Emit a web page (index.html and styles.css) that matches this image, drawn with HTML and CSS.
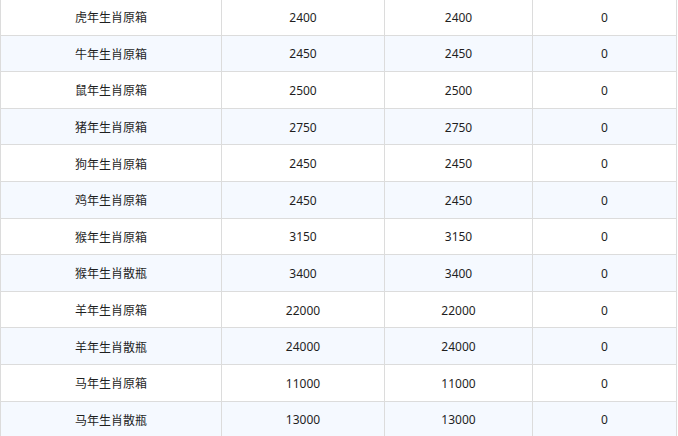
FILE: index.html
```html
<!DOCTYPE html>
<html lang="zh-CN">
<head>
<meta charset="utf-8">
<title>生肖酒库存</title>
<link rel="stylesheet" href="styles.css">
</head>
<body>
<div class="table">
  <div class="row"><div class="cell">虎年生肖原箱</div><div class="cell">2400</div><div class="cell">2400</div><div class="cell">0</div></div>
  <div class="row"><div class="cell">牛年生肖原箱</div><div class="cell">2450</div><div class="cell">2450</div><div class="cell">0</div></div>
  <div class="row"><div class="cell">鼠年生肖原箱</div><div class="cell">2500</div><div class="cell">2500</div><div class="cell">0</div></div>
  <div class="row"><div class="cell">猪年生肖原箱</div><div class="cell">2750</div><div class="cell">2750</div><div class="cell">0</div></div>
  <div class="row"><div class="cell">狗年生肖原箱</div><div class="cell">2450</div><div class="cell">2450</div><div class="cell">0</div></div>
  <div class="row"><div class="cell">鸡年生肖原箱</div><div class="cell">2450</div><div class="cell">2450</div><div class="cell">0</div></div>
  <div class="row"><div class="cell">猴年生肖原箱</div><div class="cell">3150</div><div class="cell">3150</div><div class="cell">0</div></div>
  <div class="row"><div class="cell">猴年生肖散瓶</div><div class="cell">3400</div><div class="cell">3400</div><div class="cell">0</div></div>
  <div class="row"><div class="cell">羊年生肖原箱</div><div class="cell">22000</div><div class="cell">22000</div><div class="cell">0</div></div>
  <div class="row"><div class="cell">羊年生肖散瓶</div><div class="cell">24000</div><div class="cell">24000</div><div class="cell">0</div></div>
  <div class="row"><div class="cell">马年生肖原箱</div><div class="cell">11000</div><div class="cell">11000</div><div class="cell">0</div></div>
  <div class="row"><div class="cell">马年生肖散瓶</div><div class="cell">13000</div><div class="cell">13000</div><div class="cell">0</div></div>
</div>
</body>
</html>
```
FILE: styles.css
```css
html, body {
  margin: 0;
  padding: 0;
  background: #ffffff;
  overflow: hidden;
}

body {
  font-family: "Noto Sans", "Noto Sans CJK SC", sans-serif;
  font-size: 12px;
  color: #1f1f1f;
}

.table {
  width: 677px;
  margin-top: -1px;
  border-left: 1px solid #dcdcdc;
  box-sizing: border-box;
}

.row {
  display: grid;
  grid-template-columns: 221px 163px 148px 144px;
  height: 36.6px;
  box-sizing: border-box;
  background: #ffffff;
}

.row:nth-child(even) {
  background: #f5f9ff;
}

.cell {
  display: flex;
  align-items: center;
  justify-content: center;
  box-sizing: border-box;
  border-right: 1px solid #dcdcdc;
  border-bottom: 1px solid #dcdcdc;
  padding-top: 1px;
}
```
